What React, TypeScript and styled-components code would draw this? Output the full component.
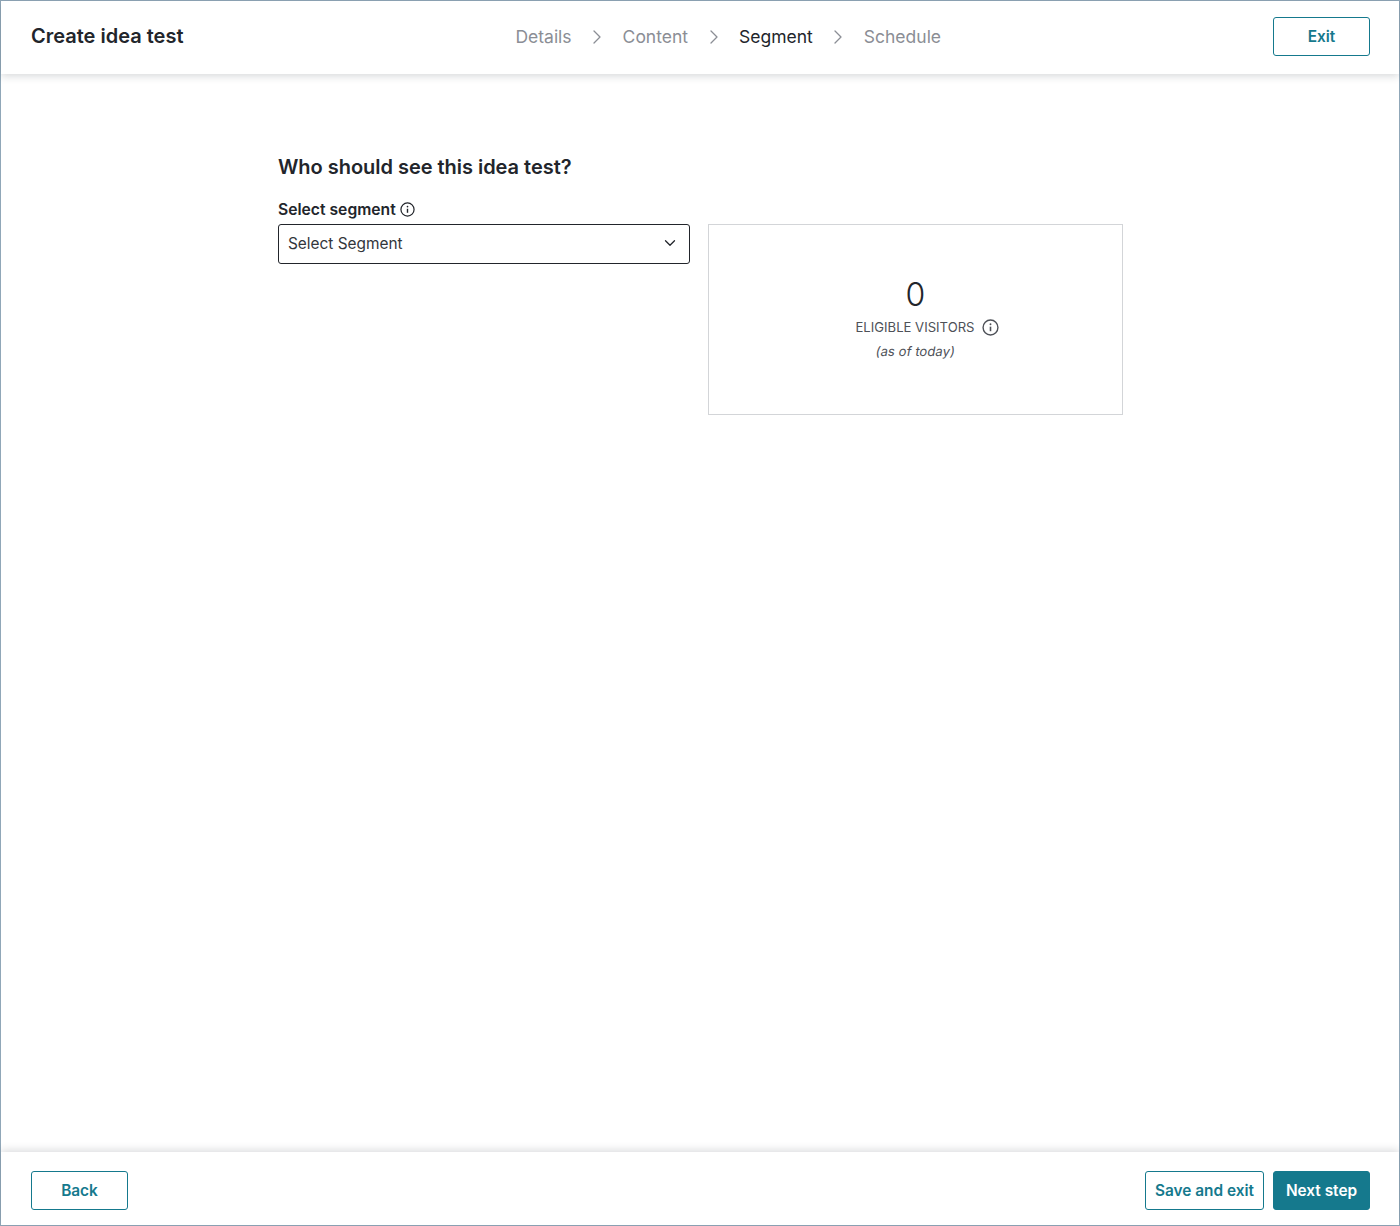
import React from 'react';
import styled, { createGlobalStyle } from 'styled-components';
import { ChevronDown, ChevronRight } from 'lucide-react';

const GlobalStyle = createGlobalStyle`
  html, body {
    margin: 0;
    padding: 0;
    background: #fff;
    font-family: Inter, "Liberation Sans", sans-serif;
    color: #22252b;
  }
  * { box-sizing: border-box; }
`;

const Frame = styled.div`
  width: 1400px;
  height: 1226px;
  border: 1px solid #90a7b8;
  display: flex;
  flex-direction: column;
  background: #fff;
`;

const Header = styled.header`
  height: 73px;
  flex: none;
  display: flex;
  justify-content: space-between;
  align-items: center;
  padding: 0 29px 1px 30px;
  background: #fff;
  box-shadow: 0 2px 8px rgba(30, 40, 50, 0.18);
  position: relative;
`;

const Title = styled.h1`
  margin: -2px 0 0;
  font-size: 20px;
  line-height: 24px;
  font-weight: 600;
  color: #22252b;
`;

const Steps = styled.nav`
  display: flex;
  align-items: center;
  font-size: 17.5px;
  line-height: 24px;
`;

const Step = styled.span<{ $active?: boolean }>`
  color: ${p => (p.$active ? '#22252b' : '#8b8e95')};
`;

const StepArrow = styled.span`
  display: flex;
  width: 51px;
  justify-content: center;
  color: #8b8e95;
`;

const HeaderEnd = styled.div`
  display: flex;
  margin-top: -2px;
`;

const Button = styled.button<{ $primary?: boolean; $width: number }>`
  width: ${p => p.$width}px;
  height: 39px;
  padding: 0;
  border-radius: 3px;
  border: 1px solid #15798d;
  background: ${p => (p.$primary ? '#15798d' : '#fff')};
  color: ${p => (p.$primary ? '#fff' : '#15798d')};
  font-family: inherit;
  font-size: 15.4px;
  font-weight: 600;
  cursor: pointer;
`;

const Main = styled.main`
  flex: 1;
  padding: 79px 0 0 277px;
`;

const Heading = styled.h2`
  margin: 0 0 19px;
  font-size: 20px;
  line-height: 28px;
  font-weight: 600;
  letter-spacing: -0.03px;
  color: #22252b;
`;

const Label = styled.label`
  display: flex;
  align-items: center;
  gap: 4px;
  height: 18px;
  margin-bottom: 6px;
  font-size: 15.7px;
  font-weight: 600;
  color: #22252b;
`;

const Columns = styled.div`
  display: flex;
  gap: 18px;
  align-items: flex-start;
`;

const SelectBox = styled.div`
  width: 412px;
  height: 40px;
  border: 1px solid #22252b;
  border-radius: 3px;
  display: flex;
  align-items: center;
  justify-content: space-between;
  padding: 0 10px 2px 9px;
  font-size: 15.4px;
  color: #33363c;
`;

const VisitorsCard = styled.section`
  width: 415px;
  height: 191px;
  border: 1px solid #d3d5d8;
  display: flex;
  flex-direction: column;
  align-items: center;
  padding-top: 50px;
`;

const Count = styled.div`
  font-size: 32px;
  line-height: 40px;
  font-weight: 300;
  color: #22252b;
`;

const VisitorsLabel = styled.div`
  display: flex;
  align-items: center;
  gap: 8px;
  margin: 2px 0 0 24px;
  height: 20px;
  font-size: 13.1px;
  color: #4e5158;
`;

const AsOf = styled.div`
  margin-top: 6px;
  font-size: 13px;
  line-height: 16px;
  letter-spacing: 0.1px;
  transform: skewX(-10deg);
  color: #4e5158;
`;

const Footer = styled.footer`
  height: 73px;
  flex: none;
  display: flex;
  justify-content: space-between;
  align-items: center;
  padding: 3px 29px 0 30px;
  background: #fff;
  box-shadow: 0 -2px 8px rgba(30, 40, 50, 0.16);
  position: relative;
`;

const FooterActions = styled.div`
  display: flex;
  gap: 9px;
`;

function InfoIcon({ size, color }: { size: number; color: string }) {
  return (
    <svg width={size} height={size} viewBox="0 0 16 16" fill="none" aria-hidden="true">
      <circle cx="8" cy="8" r="7" stroke={color} strokeWidth="1.3" />
      <circle cx="8" cy="4.9" r="0.9" fill={color} />
      <path d="M8 7.2v4.3" stroke={color} strokeWidth="1.5" />
    </svg>
  );
}

export default function App() {
  return (
    <>
      <GlobalStyle />
      <Frame>
        <Header>
          <Title>Create idea test</Title>
          <Steps>
            <Step>Details</Step>
            <StepArrow><ChevronRight size={24} strokeWidth={1.3} /></StepArrow>
            <Step>Content</Step>
            <StepArrow><ChevronRight size={24} strokeWidth={1.3} /></StepArrow>
            <Step $active>Segment</Step>
            <StepArrow><ChevronRight size={24} strokeWidth={1.3} /></StepArrow>
            <Step>Schedule</Step>
          </Steps>
          <HeaderEnd>
            <Button $width={97}>Exit</Button>
          </HeaderEnd>
        </Header>
        <Main>
          <Heading>Who should see this idea test?</Heading>
          <Label>
            Select segment
            <InfoIcon size={15} color="#22252b" />
          </Label>
          <Columns>
            <SelectBox>
              Select Segment
              <ChevronDown size={18} strokeWidth={1.7} color="#22252b" />
            </SelectBox>
            <VisitorsCard>
              <Count>0</Count>
              <VisitorsLabel>
                ELIGIBLE VISITORS
                <InfoIcon size={17} color="#4e5158" />
              </VisitorsLabel>
              <AsOf>(as of today)</AsOf>
            </VisitorsCard>
          </Columns>
        </Main>
        <Footer>
          <Button $width={97}>Back</Button>
          <FooterActions>
            <Button $width={119}>Save and exit</Button>
            <Button $primary $width={97}>Next step</Button>
          </FooterActions>
        </Footer>
      </Frame>
    </>
  );
}
